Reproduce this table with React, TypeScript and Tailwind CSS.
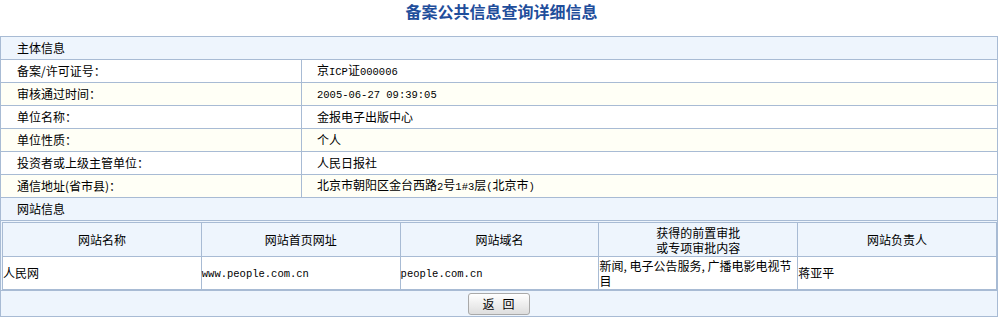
import React from "react";

const FONT = "font-['Noto_Sans_CJK_SC','Noto_Sans',sans-serif]";

// ASCII runs are drawn in a narrow monospace, like the old SimSun page
function Mixed({ text }: { text: string }) {
  const parts = text.split(/([\x20-\x7e]+)/).filter((p) => p.length > 0);
  return (
    <>
      {parts.map((p, i) =>
        /^[\x20-\x7e]+$/.test(p) ? (
          <span key={i} className="font-['Liberation_Mono',monospace] text-[10.5px]">
            {p}
          </span>
        ) : (
          <span key={i}>{p}</span>
        )
      )}
    </>
  );
}

const rows = [
  { label: "备案/许可证号：", value: "京ICP证000006" },
  { label: "审核通过时间：", value: "2005-06-27 09:39:05" },
  { label: "单位名称：", value: "金报电子出版中心" },
  { label: "单位性质：", value: "个人" },
  { label: "投资者或上级主管单位：", value: "人民日报社" },
  { label: "通信地址(省市县)：", value: "北京市朝阳区金台西路2号1#3层(北京市)" },
];

const siteHead = ["网站名称", "网站首页网址", "网站域名", "获得的前置审批\n或专项审批内容", "网站负责人"];

export default function App() {
  return (
    <div className={`w-[1003px] h-[325px] bg-white text-black text-[12px] leading-[14px] ${FONT}`}>
      <h1 className="h-[36px] pt-[1px] text-center text-[16px] leading-[20px] font-bold text-[#1f4e9b]">
        备案公共信息查询详细信息
      </h1>
      <table className="w-[998px] border-collapse table-fixed">
        <colgroup>
          <col className="w-[301px]" />
          <col />
        </colgroup>
        <tbody>
          <tr className="h-[23px] bg-[#eef5fd]">
            <td colSpan={2} className="border border-[#a8bbd4] pl-[16px]">
              主体信息
            </td>
          </tr>
          {rows.map((r, i) => (
            <tr key={r.label} className={`h-[23px] ${i % 2 === 0 ? "bg-white" : "bg-[#fffff6]"}`}>
              <td className="border border-[#a8bbd4] pl-[16px]">{r.label}</td>
              <td className="border border-[#a8bbd4] pl-[15px]">
                <Mixed text={r.value} />
              </td>
            </tr>
          ))}
          <tr className="h-[23px] bg-[#eef5fd]">
            <td colSpan={2} className="border border-[#a8bbd4] pl-[16px]">
              网站信息
            </td>
          </tr>
          <tr className="bg-[#eef5fd]">
            <td colSpan={2} className="border border-[#a8bbd4] p-0 pt-[1px] pl-[1px]">
              <table className="w-[995px] border-collapse table-fixed">
                <tbody>
                  <tr className="h-[34px] bg-[#eef5fd]">
                    {siteHead.map((h) => (
                      <td key={h} className="border border-[#a8bbd4] text-center whitespace-pre-line leading-[15px]">
                        {h}
                      </td>
                    ))}
                  </tr>
                  <tr className="h-[33px] bg-white">
                    <td className="border border-[#a8bbd4] px-0">人民网</td>
                    <td className="border border-[#a8bbd4] px-0">
                      <Mixed text="www.people.com.cn" />
                    </td>
                    <td className="border border-[#a8bbd4] px-0">
                      <Mixed text="people.com.cn" />
                    </td>
                    <td className="border border-[#a8bbd4] px-0 leading-[15px]">新闻, 电子公告服务, 广播电影电视节目</td>
                    <td className="border border-[#a8bbd4] px-0">蒋亚平</td>
                  </tr>
                </tbody>
              </table>
            </td>
          </tr>
          <tr className="h-[26px] bg-[#eef5fd]">
            <td colSpan={2} className="border border-[#a8bbd4] text-center">
              <button className="w-[62px] h-[22px] ml-[-1px] rounded-[3px] border border-[#a9a9a9] bg-gradient-to-b from-white to-[#dedede] text-[12px] leading-[14px] text-black">
                返&nbsp;&nbsp;&nbsp;回
              </button>
            </td>
          </tr>
        </tbody>
      </table>
    </div>
  );
}
